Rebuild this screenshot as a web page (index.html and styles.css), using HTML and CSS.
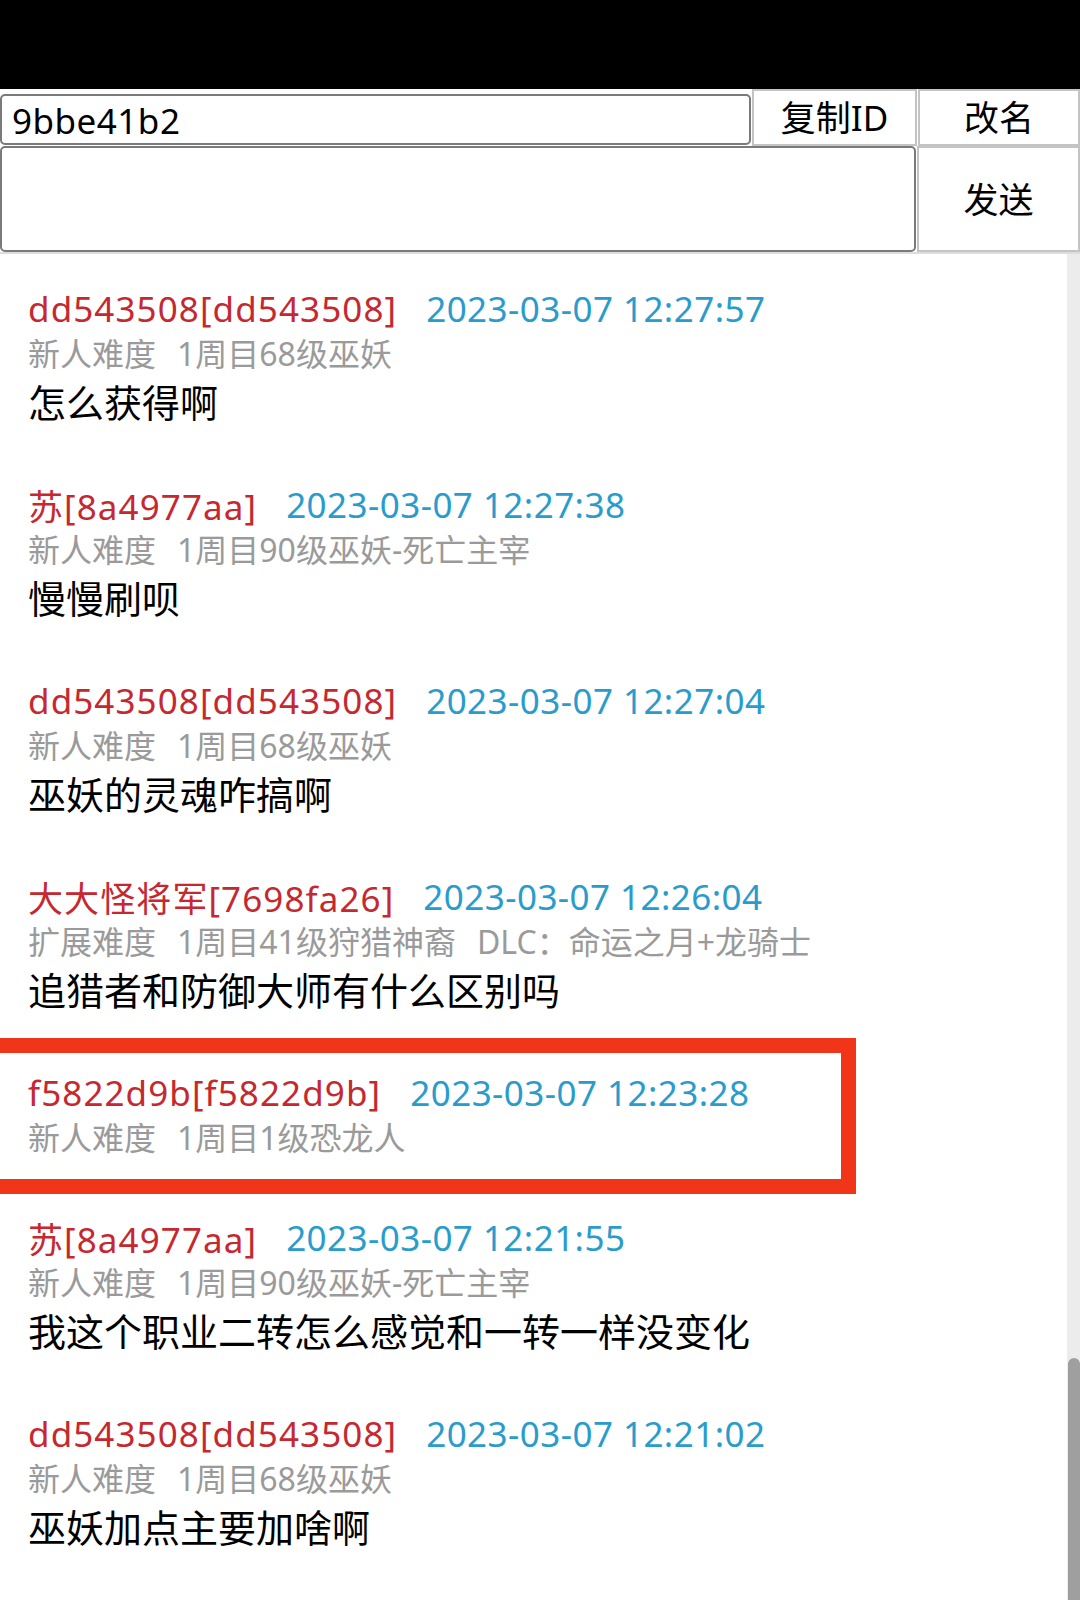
FILE: index.html
```html
<!DOCTYPE html>
<html lang="zh-CN">
<head>
<meta charset="utf-8">
<title>留言</title>
<link rel="stylesheet" href="styles.css">
</head>
<body>
<div class="topbar"></div>
<div class="controls">
  <div class="row row-id">
    <input class="id-input" type="text" value="9bbe41b2">
    <button class="btn btn-copy">复制ID</button>
    <button class="btn btn-rename">改名</button>
  </div>
  <div class="row row-send">
    <textarea class="msg-input"></textarea>
    <button class="btn btn-send">发送</button>
  </div>
</div>
<div class="list">
  <div class="entry">
    <div class="head"><span class="name">dd543508[dd543508]</span><span class="time">2023-03-07 12:27:57</span></div>
    <div class="meta"><span class="diff">新人难度</span><span>1周目68级巫妖</span></div>
    <div class="text">怎么获得啊</div>
  </div>
  <div class="entry">
    <div class="head"><span class="name">苏[8a4977aa]</span><span class="time">2023-03-07 12:27:38</span></div>
    <div class="meta"><span class="diff">新人难度</span><span>1周目90级巫妖-死亡主宰</span></div>
    <div class="text">慢慢刷呗</div>
  </div>
  <div class="entry">
    <div class="head"><span class="name">dd543508[dd543508]</span><span class="time">2023-03-07 12:27:04</span></div>
    <div class="meta"><span class="diff">新人难度</span><span>1周目68级巫妖</span></div>
    <div class="text">巫妖的灵魂咋搞啊</div>
  </div>
  <div class="entry">
    <div class="head"><span class="name">大大怪将军[7698fa26]</span><span class="time">2023-03-07 12:26:04</span></div>
    <div class="meta"><span class="diff">扩展难度</span><span class="diff">1周目41级狩猎神裔</span><span>DLC：命运之月+龙骑士</span></div>
    <div class="text">追猎者和防御大师有什么区别吗</div>
  </div>
  <div class="entry entry-marked">
    <div class="head"><span class="name">f5822d9b[f5822d9b]</span><span class="time">2023-03-07 12:23:28</span></div>
    <div class="meta"><span class="diff">新人难度</span><span>1周目1级恐龙人</span></div>
    <div class="mark"></div>
  </div>
  <div class="entry">
    <div class="head"><span class="name">苏[8a4977aa]</span><span class="time">2023-03-07 12:21:55</span></div>
    <div class="meta"><span class="diff">新人难度</span><span>1周目90级巫妖-死亡主宰</span></div>
    <div class="text">我这个职业二转怎么感觉和一转一样没变化</div>
  </div>
  <div class="entry">
    <div class="head"><span class="name">dd543508[dd543508]</span><span class="time">2023-03-07 12:21:02</span></div>
    <div class="meta"><span class="diff">新人难度</span><span>1周目68级巫妖</span></div>
    <div class="text">巫妖加点主要加啥啊</div>
  </div>
  <div class="scrollbar"><div class="thumb"></div></div>
</div>
</body>
</html>
```
FILE: styles.css
```css
html, body {
  margin: 0;
  padding: 0;
  height: 1600px;
  overflow: hidden;
  background: #ffffff;
  font-family: "Noto Sans", "Noto Sans CJK SC", sans-serif;
}

.topbar {
  height: 89px;
  background: #000000;
}

.controls {
  border-bottom: 2px solid #dddddd;
}

.row {
  display: flex;
  align-items: flex-end;
  gap: 1px;
}

.row-id {
  height: 57px;
}

.id-input {
  box-sizing: border-box;
  width: 751px;
  height: 51px;
  margin: 0 0 1px 0;
  padding: 2px 0 0 10px;
  border: 2px solid #7a7a7a;
  border-radius: 5px;
  font-family: "Noto Sans", "Noto Sans CJK SC", sans-serif;
  font-size: 35px;
  letter-spacing: 0.5px;
  color: #000000;
  background: #ffffff;
  outline: none;
}

.btn {
  box-sizing: border-box;
  margin: 0;
  padding: 0;
  border: 2px solid #c4c4c4;
  background: #ffffff;
  color: #000000;
  font-family: "Noto Sans", "Noto Sans CJK SC", sans-serif;
  font-size: 35px;
  line-height: 1;
}

.btn-copy {
  width: 165px;
  height: 57px;
}

.btn-rename {
  flex: 1;
  height: 57px;
}

.row-send {
  height: 106px;
}

.msg-input {
  box-sizing: border-box;
  width: 916px;
  height: 106px;
  margin: 0;
  border: 2px solid #7a7a7a;
  border-radius: 5px;
  resize: none;
  outline: none;
  background: #ffffff;
}

.btn-send {
  flex: 1;
  height: 106px;
}

.list {
  position: relative;
}

.entry {
  position: relative;
  padding: 31px 28px 22px 28px;
}

.head {
  display: flex;
  height: 46px;
  align-items: center;
  font-size: 35px;
  white-space: nowrap;
}

.name {
  color: #c62830;
  letter-spacing: 1.1px;
}

.time {
  color: #2a9ccb;
  margin-left: 29px;
  letter-spacing: 0.45px;
}

.meta {
  height: 46px;
  line-height: 46px;
  font-size: 32px;
  color: #9a9a9a;
  white-space: nowrap;
}

.diff {
  margin-right: 21px;
}

.text {
  height: 51px;
  line-height: 51px;
  font-size: 38px;
  color: #000000;
  white-space: nowrap;
}

.mark {
  position: absolute;
  left: -20px;
  top: 0;
  width: 876px;
  height: 156px;
  box-sizing: border-box;
  border: 15px solid #f03518;
}

.scrollbar {
  position: absolute;
  top: 0;
  right: 0;
  width: 13px;
  height: 1360px;
  background: #ececec;
}

.thumb {
  position: absolute;
  left: 1px;
  right: 0;
  top: 1104px;
  bottom: 0;
  background: #9f9f9f;
  border-radius: 6px 6px 0 0;
}
```
